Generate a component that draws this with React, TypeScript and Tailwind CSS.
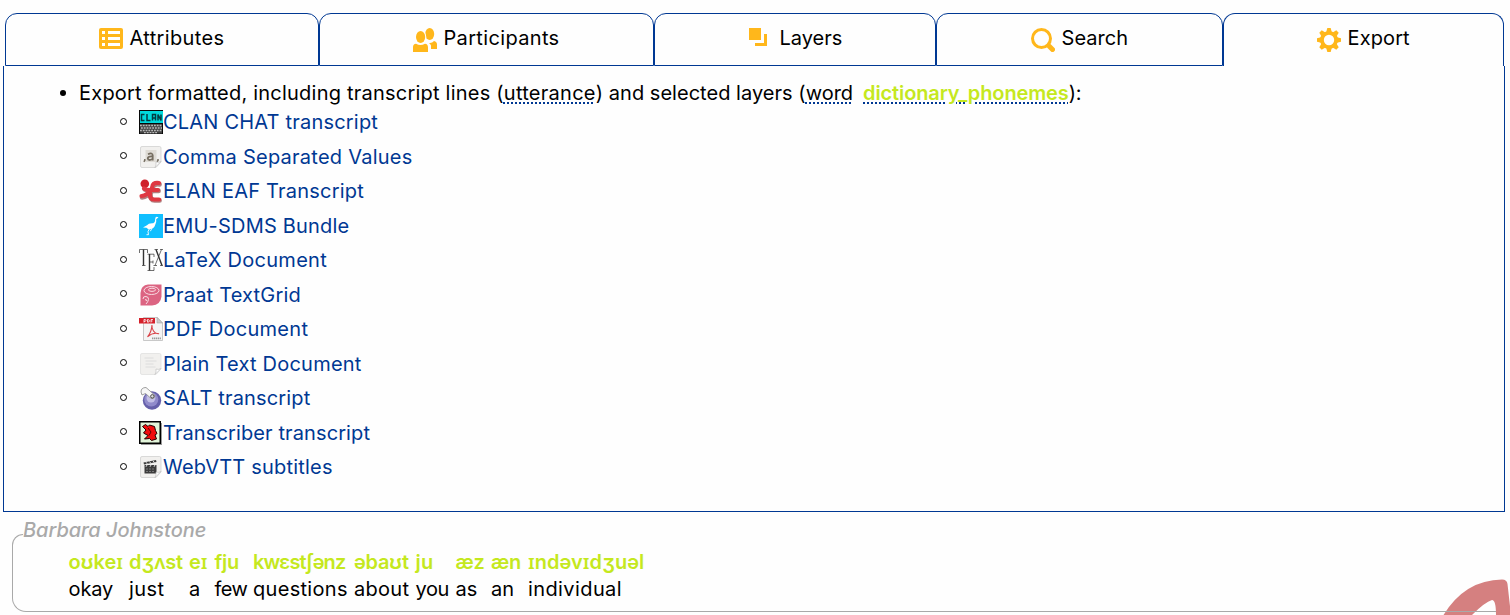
import type { ReactNode } from "react";

type Tab = { label: string; box: string; tracking: string; icon: ReactNode };

const tabs: Tab[] = [
  {
    label: "Attributes",
    box: "w-[314px] pl-[93px] border-b",
    tracking: "tracking-[0.35px]",
    icon: (
      <svg width="24" height="24" viewBox="0 0 24 24">
        <rect width="24" height="21" rx="2" fill="#ffb71b" />
        <path fill="#fff" d="M3 3h3v3H3zM9 3h12v3H9zM3 9h3v3H3zM9 9h12v3H9zM3 15h3v3H3zM9 15h12v3H9z" />
      </svg>
    ),
  },
  {
    label: "Participants",
    box: "w-[335px] pl-[93px] border-b",
    tracking: "tracking-[0.34px]",
    icon: (
      <svg width="24" height="24" viewBox="0 0 24 24" fill="#ffb71b">
        <ellipse cx="16.700" cy="6" rx="4.500" ry="6" />
        <ellipse cx="7.600" cy="9" rx="5.700" ry="7.200" fill="#fff" />
        <ellipse cx="7.600" cy="9" rx="4.600" ry="6.100" />
        <path d="M0 24v-5Q0 16 3 15.700Q7.500 18.500 12 15.700Q15 16 15 19.500V24zM18 21v-3.500Q17.500 16 16 15Q19 15.500 21 13Q24 13.500 24 16.500V21z" />
      </svg>
    ),
  },
  {
    label: "Layers",
    box: "w-[282px] pl-[94px] border-b",
    tracking: "tracking-[0px]",
    icon: (
      <svg width="24" height="24" viewBox="0 0 24 24" fill="#ffb71b">
        <path d="M0 0h12v12H0zM15 6h3v12H6v-3h9z" />
      </svg>
    ),
  },
  {
    label: "Search",
    box: "w-[287px] pl-[94px] border-b",
    tracking: "tracking-[0.05px]",
    icon: (
      <svg width="24" height="24" viewBox="0 0 24 24" fill="none" stroke="#ffb71b">
        <circle cx="10.500" cy="10.500" r="9" strokeWidth="3" />
        <path d="M18.500 18.500l3 3" strokeWidth="5" strokeLinecap="round" />
      </svg>
    ),
  },
  {
    label: "Export",
    box: "w-[281px] pl-[93px]",
    tracking: "tracking-[0.12px]",
    icon: (
      <svg width="24" height="24" viewBox="0 0 24 24">
        <g fill="#ffb71b">
          <circle cx="12" cy="12" r="9" />
          <path id="cog-tooth" d="M9 5L10.300 0h3.400L15 5v14l-1.300 5h-3.400L9 19z" />
          <use href="#cog-tooth" transform="rotate(45 12 12)" />
          <use href="#cog-tooth" transform="rotate(90 12 12)" />
          <use href="#cog-tooth" transform="rotate(135 12 12)" />
        </g>
        <circle cx="12" cy="12" r="5.200" fill="#fff" />
      </svg>
    ),
  },
];

const Paper = ({ children, stroke = "#ccc" }: { children: ReactNode; stroke?: string }) => (
  <>
    <path d="M3 1.500h17.500q1.500 0 1.500 1.500v14l-5 5.500H3q-1.500 0-1.500-1.500V3q0-1.500 1.500-1.500z" fill="#f1f0ee" stroke={stroke} strokeWidth=".7" />
    {children}
    <path d="M16 22.500q1.500-2.500 1-5.500q2.500 1 5-.5z" fill="#fff" stroke="#bbb" strokeWidth=".6" />
  </>
);

const formats: { label: string; tracking: string; icon: ReactNode }[] = [
  {
    label: "CLAN CHAT transcript",
    tracking: "tracking-[0.2px]",
    icon: (
      <>
        <rect width="24" height="24" fill="#080808" />
        <rect x="1" y="1" width="23" height="12" fill="#00d8dc" />
        <path fill="none" stroke="#023b42" strokeWidth="1.500" d="M5.500 4.500H2.500v6h3M8 4v6.500h3.500M13.500 10.500v-6h3v6M13.500 8h3M19 10.500v-6l3 6v-6" />
        <rect x="1" y="14" width="22" height="9.500" fill="#444" />
        <path stroke="#b8b8b8" strokeWidth="1.300" strokeDasharray="1.800 1" d="M1 15.500h22M2 18h21M1 20.500h22M5 22.700h14" />
      </>
    ),
  },
  {
    label: "Comma Separated Values",
    tracking: "tracking-[0.24px]",
    icon: (
      <Paper>
        <rect x="6.500" y="5" width="11" height="12" fill="#dedbd5" />
        <path fill="none" stroke="#756d60" strokeWidth="1.800" d="M9 9.200q4.500-2 4.700 1.200v5.100M13.500 11.500q-4.500-.3-4.700 1.800q.4 3 4.700.7" />
        <path fill="none" stroke="#756d60" strokeWidth="1.500" d="M5.800 14v1.500l-1 1.300M19 14v1.500l-1 1.300" />
      </Paper>
    ),
  },
  {
    label: "ELAN EAF Transcript",
    tracking: "tracking-[0.22px]",
    icon: (
      <>
        <g transform="translate(.6 .9)" fill="none" stroke="#7d2a2a" strokeLinecap="round" strokeLinejoin="round" strokeWidth="4.600" opacity=".6">
          <path d="M20 4.500q-7-1-7 5q-1 4-5 6q-3 2-5.500 2M5 9.500q3 2 8 1.500h6M11 14.500q-.5 6 4 6h5" />
        </g>
        <circle cx="5.800" cy="4.800" r="4.300" fill="#cf2029" />
        <g fill="none" stroke="#df3842" strokeLinecap="round" strokeLinejoin="round" strokeWidth="4.200">
          <path d="M20 4q-7-1-7 5q-1 4-5 6q-3 2-5.500 2M5 9.500q3 2 8 1.500h6M11 14.500q-.5 6 4 6h5" />
        </g>
      </>
    ),
  },
  {
    label: "EMU-SDMS Bundle",
    tracking: "tracking-[0.2px]",
    icon: (
      <>
        <rect width="24" height="24" fill="#10bfff" />
        <path fill="#fff" d="M19.500 3.300l-1.800-.6q-1.700.3-1.500 2.200q.2 3-2 4.300q-4.700-.3-6.200 2L4 13.500l3.500.3q1.500 2 4 1.200q3.700-.3 4.700-4.200q1.500-2 1-5.500z" />
        <path fill="none" stroke="#fff" strokeWidth=".9" d="M10.500 14.500l-1.500 3l.5 3.200h-2M13 14l-1.600 3.200" />
      </>
    ),
  },
  {
    label: "LaTeX Document",
    tracking: "tracking-[0.28px]",
    icon: (
      <g fill="none" stroke="#333">
        <path strokeWidth="1.400" d="M4.500 1.500v16M10.500 6v16.500M17 1.500l6 16" />
        <path strokeWidth=".7" d="M.500 5V1.500h8V5M3 17.500h3.500M8.500 6.200h6.500V9M8.500 22.500h6.500v-3.500M10.500 14h3.500M14 12.500v3M22.500 1.500l-6.500 16M15.500 1.500H19M21 1.500h3M14.500 17.500H18M21 17.500h3" />
      </g>
    ),
  },
  {
    label: "Praat TextGrid",
    tracking: "tracking-[0.2px]",
    icon: (
      <>
        <path d="M9 1.500h13.500v12Q21.500 22 13 22.500H1.500V10Q2 2 9 1.500z" fill="#dc6482" />
        <g fill="none" stroke="#f9dbe2" strokeWidth="1">
          <ellipse cx="12.500" cy="7.500" rx="7.500" ry="4" />
          <ellipse cx="13" cy="6.800" rx="3.500" ry="1.600" />
          <path d="M4 16q0-3 3-2.500t2.500 3q-.5 2.500-2.500 4.500M6 17q1.500-1.500 1.800 1" />
        </g>
      </>
    ),
  },
  {
    label: "PDF Document",
    tracking: "tracking-[0.28px]",
    icon: (
      <>
        <path d="M4.500.500h14L23.500 6v17.500h-19z" fill="#f4f4f4" stroke="#bbb" strokeWidth=".8" />
        <path d="M18 .500V6h5.500z" fill="#ccc" stroke="#999" strokeWidth=".5" />
        <path d="M0 1h16v5.500H0z" fill="#d5202a" />
        <path fill="none" stroke="#fff" strokeWidth=".8" d="M5 5.500v-3q2.500 0 2 1.200T5 4.300M8.500 2.500v2.700q2.300 0 2-1.400t-2-1.300M12 5.500v-3h2M12 4h1.500" />
        <path fill="none" stroke="#d94348" strokeWidth="1.100" d="M13 8q-.5 3 1.500 6t5.500 2.800q-6-1.800-11.500 3q4-4.500 4.500-11.800" />
        <path stroke="#999" strokeWidth="1.800" strokeDasharray="1.300 .6" d="M13 21.300h9" />
      </>
    ),
  },
  {
    label: "Plain Text Document",
    tracking: "tracking-[0.22px]",
    icon: (
      <Paper stroke="#ddd">
        <path stroke="#dcdcdc" strokeWidth="1" d="M5.500 6h9M6.500 9h11M6.500 12h8M6.500 15h10" />
      </Paper>
    ),
  },
  {
    label: "SALT transcript",
    tracking: "tracking-[0.15px]",
    icon: (
      <>
        <circle cx="13" cy="14.500" r="9.200" fill="#6660aa" />
        <circle cx="12.300" cy="13.500" r="7" fill="#918bcb" />
        <circle cx="12" cy="12" r="4.500" fill="#c3bfe6" />
        <path d="M2 6q0-4.500 5-4.500l7.500 6.500q2.500 2 .5 4q-2 1.500-4-.5L6.500 7.500L3 9z" fill="#f7f7f7" stroke="#888" strokeWidth=".8" />
        <circle cx="13.300" cy="10.300" r="1.700" fill="#ddd" stroke="#333" strokeWidth=".8" />
      </>
    ),
  },
  {
    label: "Transcriber transcript",
    tracking: "tracking-[0.11px]",
    icon: (
      <>
        <path d="M2 2h21v22H2z" fill="#999" />
        <rect x=".75" y=".75" width="20.500" height="21.500" fill="#e2f5da" stroke="#000" strokeWidth="1.500" />
        <path d="M3.500 5.500l3-2l2.500 2l1.500-1.500l5 1.500l1 4l1.500 3l-2 1.500l1.500 4l-5 1.500l-2-2l-5 .5l3.500-3.500L4.500 12L7 9z" fill="#f00d0d" stroke="#200" strokeWidth="1" />
        <path d="M9 7l3 4l-2 3.500" fill="none" stroke="#500" strokeWidth=".9" />
      </>
    ),
  },
  {
    label: "WebVTT subtitles",
    tracking: "tracking-[0.2px]",
    icon: (
      <Paper>
        <path d="M5.500 10h12v8.500h-12z" fill="#3c3c3c" />
        <path d="M4.500 7.500l12.500-2.500l.5 2l-12.500 2.500z" fill="#3c3c3c" />
        <path stroke="#ddd" strokeWidth="1" d="M7 7.200l1.500 2M10.500 6.500l1.500 2M14 5.800l1.500 2M8 10l-1 1.800M12 10l-1 1.800M16 10l-1 1.800" />
        <path stroke="#888" strokeWidth=".8" strokeDasharray="2 1" d="M7 14h9M7 16.500h9" />
      </Paper>
    ),
  },
];

const words: { ipa: string; word: string; width: string; ipaTracking: string; tracking: string }[] = [
  { ipa: "oʊkeɪ", word: "okay", width: "w-[60.5px]", ipaTracking: "tracking-[-0.1px]", tracking: "tracking-[-0.1px]" },
  { ipa: "dʒʌst", word: "just", width: "w-[60px]", ipaTracking: "tracking-[-0.3px]", tracking: "tracking-[0.4px]" },
  { ipa: "eɪ", word: "a", width: "w-[25.5px]", ipaTracking: "tracking-[-0.1px]", tracking: "tracking-[0px]" },
  { ipa: "fju", word: "few", width: "w-[38.5px]", ipaTracking: "tracking-[-0.3px]", tracking: "tracking-[-0.5px]" },
  { ipa: "kwɛstʃənz", word: "questions", width: "w-[101px]", ipaTracking: "tracking-[-0.9px]", tracking: "tracking-[0.3px]" },
  { ipa: "əbaʊt", word: "about", width: "w-[61.5px]", ipaTracking: "tracking-[-0.3px]", tracking: "tracking-[0.3px]" },
  { ipa: "ju", word: "you", width: "w-[40px]", ipaTracking: "tracking-[0.3px]", tracking: "tracking-[-0.4px]" },
  { ipa: "æz", word: "as", width: "w-[35.5px]", ipaTracking: "tracking-[-0.3px]", tracking: "tracking-[0px]" },
  { ipa: "æn", word: "an", width: "w-[37px]", ipaTracking: "tracking-[-0.2px]", tracking: "tracking-[0px]" },
  { ipa: "ɪndəvɪdʒuəl", word: "individual", width: "w-[120px]", ipaTracking: "tracking-[0px]", tracking: "tracking-[0.4px]" },
];

const dotted = "underline decoration-[#003893] decoration-dotted decoration-2 underline-offset-[3px]";

export default function App() {
  return (
    <div className="relative h-[615px] w-[1510px] overflow-hidden bg-[#fefefe] pt-[13px] font-['Inter','Noto_Sans',sans-serif] text-[20px] text-black">
      <svg className="absolute bottom-0 right-0" width="70" height="40" viewBox="0 0 70 40">
        <path d="M3.500 40Q25 5 62 4.500Q67 4.500 67.500 9L71 40H56Q56 25 52 25Q45 27 32 40z" fill="#d58080" />
      </svg>

      <nav className="ml-[5px] flex h-[53px] w-[1499px]">
        {tabs.map((t) => (
          <button key={t.label} className={`flex h-[53px] shrink-0 items-start gap-[6.500px] rounded-t-[12px] border-x border-t border-[#003893] pt-[14px] ${t.box}`}>
            {t.icon}
            <span className={`-mt-[2px] leading-[24px] ${t.tracking}`}>{t.label}</span>
          </button>
        ))}
      </nav>

      <main className="ml-[3px] h-[446px] w-[1502px] border-x border-b border-[#003893] pt-[14.750px]">
        <div className="flex h-[24px] items-center whitespace-pre pl-[56px] leading-[24px]">
          <span className="mr-[13px] mt-[1px] size-[6px] shrink-0 rounded-full bg-black" />
          <p>
            <span className="tracking-[0.22px]">Export formatted, including transcript lines (</span>
            <span className={`tracking-[0.27px] ${dotted}`}>utterance</span>
            <span className="tracking-[0.03px]">) and selected layers (</span>
            <span className={dotted}>word</span>
            <span className="inline-block w-[10px]"> </span>
            <span className={`font-semibold tracking-[-0.120px] text-[#c5e81e] ${dotted}`}>dictionary_phonemes</span>
            <span className="tracking-[-0.3px]">):</span>
          </p>
        </div>
        <ul>
          {formats.map((f) => (
            <li key={f.label} className="flex h-[34.5px] items-center pl-[115.500px]">
              <span className="mb-[2px] mr-[12.500px] size-[7px] shrink-0 rounded-full border border-black" />
              <a className="flex items-center text-[#003893]">
                <svg width="24" height="24" viewBox="0 0 24 24">{f.icon}</svg>
                <span className={`leading-[24px] ${f.tracking}`}>{f.label}</span>
              </a>
            </li>
          ))}
        </ul>
      </main>

      <section className="relative ml-[12px] w-[1484px]">
        <header className="flex h-[36px] items-center">
          <span className="h-[14px] w-[11px] self-end rounded-tl-[14px] border-l border-t border-[#a9a9a9]" />
          <span className="font-medium italic leading-[24px] tracking-[-0.060px] text-[#a9a9a9]">Barbara Johnstone</span>
        </header>
        <div className="flex h-[64px] rounded-bl-[14px] border-b border-l border-[#a9a9a9] pl-[55.5px] pt-[1px]">
          {words.map((w) => (
            <div key={w.word} className={`flex shrink-0 flex-col whitespace-nowrap leading-[27px] ${w.width}`}>
              <span className={`font-semibold text-[#c5e81e] ${w.ipaTracking}`}>{w.ipa}</span>
              <span className={w.tracking}>{w.word}</span>
            </div>
          ))}
        </div>
      </section>
    </div>
  );
}
